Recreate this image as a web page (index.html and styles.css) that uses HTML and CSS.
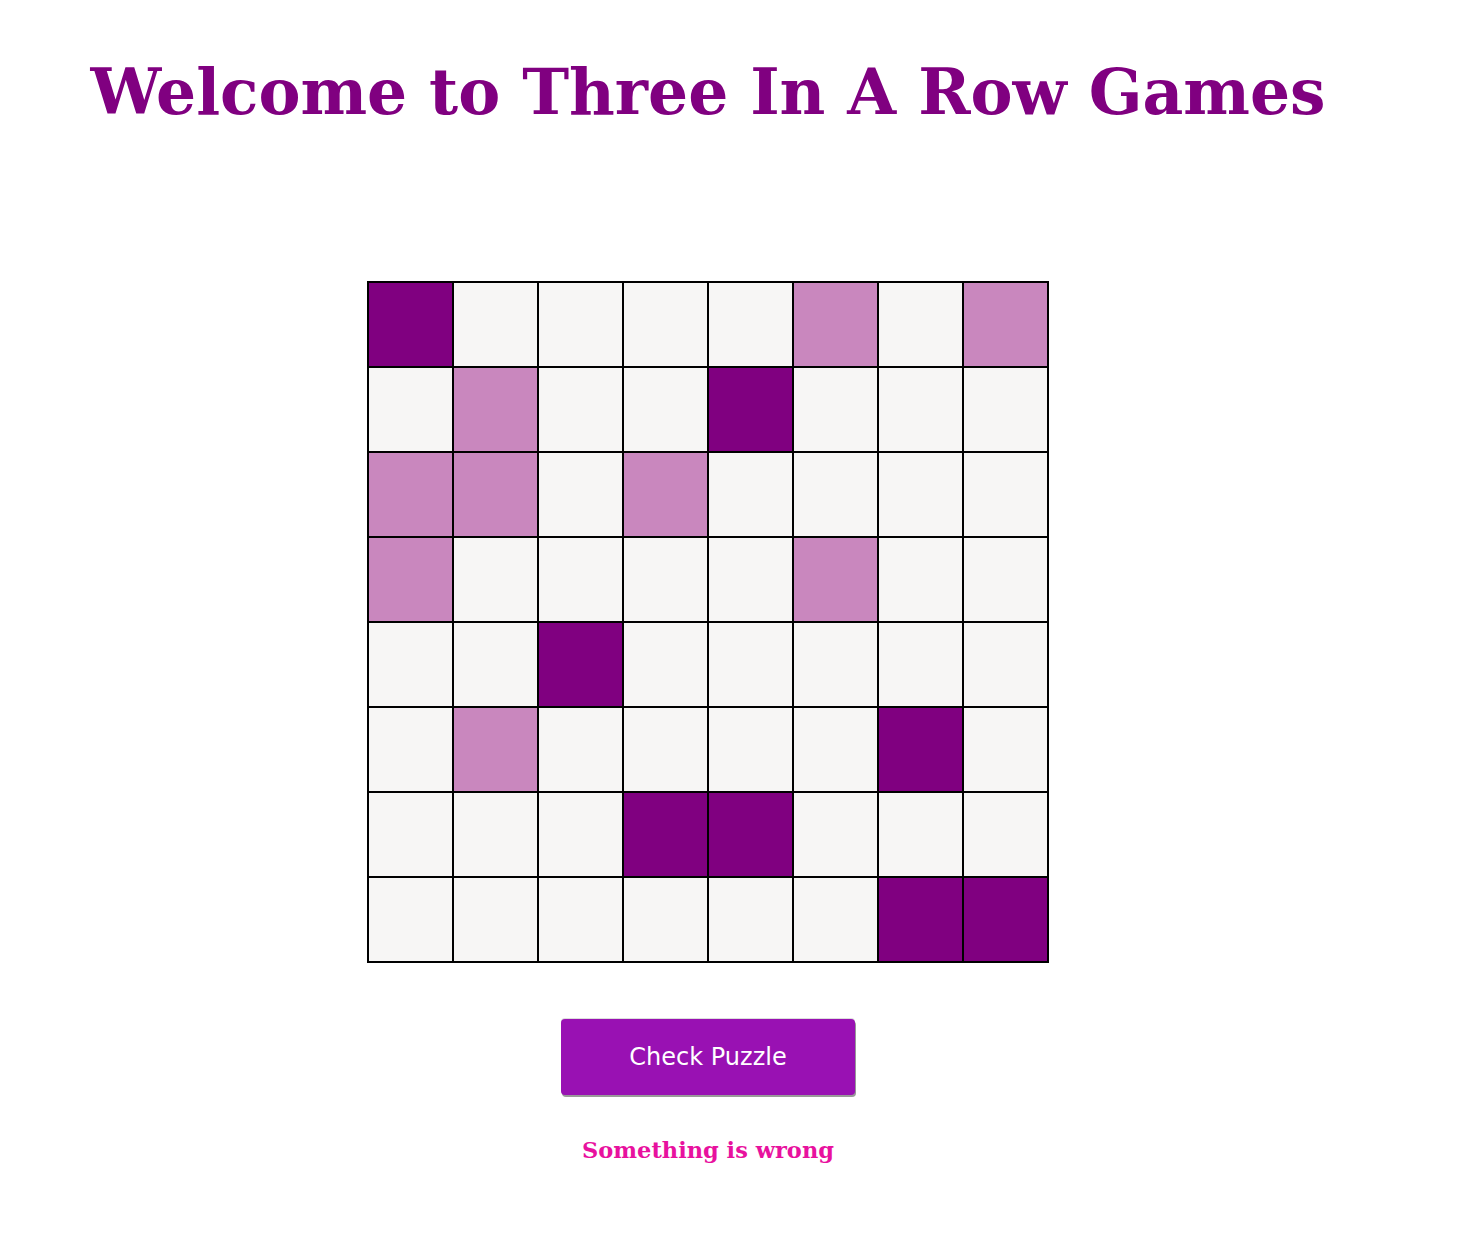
FILE: index.html
```html
<!DOCTYPE html>
<html>
<head>
<meta charset="utf-8">
<title>Three In A Row</title>
<link rel="stylesheet" href="styles.css">
</head>
<body>
<main class="page">
  <h1 class="title">Welcome to Three In A Row Games</h1>
  <div class="board">
    <div class="cell dark"></div><div class="cell"></div><div class="cell"></div><div class="cell"></div><div class="cell"></div><div class="cell light"></div><div class="cell"></div><div class="cell light"></div>
    <div class="cell"></div><div class="cell light"></div><div class="cell"></div><div class="cell"></div><div class="cell dark"></div><div class="cell"></div><div class="cell"></div><div class="cell"></div>
    <div class="cell light"></div><div class="cell light"></div><div class="cell"></div><div class="cell light"></div><div class="cell"></div><div class="cell"></div><div class="cell"></div><div class="cell"></div>
    <div class="cell light"></div><div class="cell"></div><div class="cell"></div><div class="cell"></div><div class="cell"></div><div class="cell light"></div><div class="cell"></div><div class="cell"></div>
    <div class="cell"></div><div class="cell"></div><div class="cell dark"></div><div class="cell"></div><div class="cell"></div><div class="cell"></div><div class="cell"></div><div class="cell"></div>
    <div class="cell"></div><div class="cell light"></div><div class="cell"></div><div class="cell"></div><div class="cell"></div><div class="cell"></div><div class="cell dark"></div><div class="cell"></div>
    <div class="cell"></div><div class="cell"></div><div class="cell"></div><div class="cell dark"></div><div class="cell dark"></div><div class="cell"></div><div class="cell"></div><div class="cell"></div>
    <div class="cell"></div><div class="cell"></div><div class="cell"></div><div class="cell"></div><div class="cell"></div><div class="cell"></div><div class="cell dark"></div><div class="cell dark"></div>
  </div>
  <button class="check">Check Puzzle</button>
  <p class="status">Something is wrong</p>
</main>
</body>
</html>
```
FILE: styles.css
```css
body {
  margin: 8px;
  background: #ffffff;
}
.page {
  width: 1400px;
  display: flex;
  flex-direction: column;
  align-items: center;
}
.title {
  font-family: "DejaVu Serif", "Liberation Serif", serif;
  font-weight: bold;
  font-size: 63px;
  color: #800080;
  margin: 44px 0 0;
  line-height: 80px;
  white-space: nowrap;
}
.board {
  margin-top: 149px;
  display: grid;
  grid-template-columns: repeat(8, 83px);
  grid-auto-rows: 83px;
  gap: 2px;
  padding: 2px;
  background: #000000;
}
.cell {
  background: #f7f6f5;
}
.cell.dark {
  background: #800080;
}
.cell.light {
  background: #c987be;
}
.check {
  margin-top: 56px;
  width: 294px;
  height: 76px;
  background: #9911b3;
  color: #ffffff;
  font-family: "DejaVu Sans", Verdana, sans-serif;
  font-size: 24px;
  border: none;
  border-radius: 4px;
  box-shadow: 1px 2px 0 #999999, 0 -1px 0 #dddddd;
  padding: 0;
}
.status {
  font-family: "DejaVu Serif", "Liberation Serif", serif;
  font-weight: bold;
  font-size: 22.5px;
  color: #e8119e;
  margin: 42px 0 0;
}
```
